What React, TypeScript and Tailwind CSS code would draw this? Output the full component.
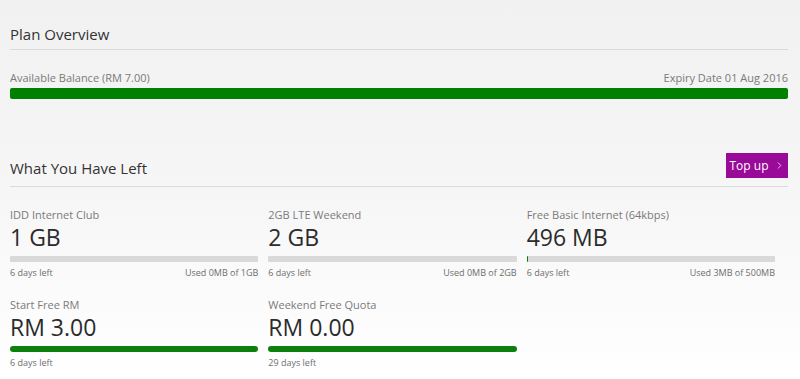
import React from 'react';
import { ChevronRight } from 'lucide-react';

type Allowance = {
  name: string;
  value: string;
  daysLeft: string;
  used?: string;
  fill: number;
  track: 'gray' | 'green';
};

const allowances: Allowance[] = [
  { name: 'IDD Internet Club', value: '1 GB', daysLeft: '6 days left', used: 'Used 0MB of 1GB', fill: 0, track: 'gray' },
  { name: '2GB LTE Weekend', value: '2 GB', daysLeft: '6 days left', used: 'Used 0MB of 2GB', fill: 0, track: 'gray' },
  { name: 'Free Basic Internet (64kbps)', value: '496 MB', daysLeft: '6 days left', used: 'Used 3MB of 500MB', fill: 0.7, track: 'gray' },
  { name: 'Start Free RM', value: 'RM 3.00', daysLeft: '6 days left', fill: 100, track: 'green' },
  { name: 'Weekend Free Quota', value: 'RM 0.00', daysLeft: '29 days left', fill: 100, track: 'green' }
];

function AllowanceCard({ item }: { item: Allowance }) {
  return (
    <div className="flex flex-col">
      <div className="text-[11px] leading-[15px] text-[#7a7a7a]">{item.name}</div>
      <div className="text-[23px] leading-[31px] text-[#2b2b2b]">{item.value}</div>
      <div
        className={
          item.track === 'green'
            ? 'mt-[3px] h-[6px] rounded-[3px] bg-[#0d7f0d] overflow-hidden'
            : 'mt-[3px] h-[6px] rounded-[1px] bg-[#d9d9d9] overflow-hidden'
        }
      >
        <div className="h-full bg-[#0d7f0d]" style={{ width: `${item.fill}%` }} />
      </div>
      <div className="mt-[4px] flex justify-between text-[9px] leading-[14px] text-[#6e6e6e]">
        <span>{item.daysLeft}</span>
        {item.used && <span>{item.used}</span>}
      </div>
    </div>
  );
}

export default function App() {
  return (
    <div
      className="min-h-[379px] w-[800px] bg-gradient-to-b from-[#f1f1f1] via-[#f6f6f6] to-white px-[10px] pt-[24px]"
      style={{ fontFamily: '"Open Sans", "Noto Sans", sans-serif' }}
    >
      <div className="w-[778px]">
        <h2 className="text-[15px] leading-[20px] text-[#333] pb-[5px] border-b border-[#dadada]">Plan Overview</h2>

        <div className="mt-[20px] flex justify-between text-[11px] leading-[16px] text-[#7a7a7a]">
          <span>Available Balance (RM 7.00)</span>
          <span>Expiry Date 01 Aug 2016</span>
        </div>
        <div className="mt-[2px] h-[11px] rounded-[2px] bg-[#008000]" />

        <div className="mt-[54px] flex items-end justify-between border-b border-[#dadada] pb-[8px]">
          <h2 className="text-[15px] leading-[20px] text-[#333]">What You Have Left</h2>
          <button className="flex h-[25px] w-[62px] items-center justify-center gap-[5px] bg-[#990a99] text-[12px] leading-[16px] text-white">
            Top up
            <ChevronRight size={11} strokeWidth={1.5} />
          </button>
        </div>
      </div>

      <div className="mt-[20px] grid w-[765px] grid-cols-3 gap-x-[10px] gap-y-[17px]">
        {allowances.map((item, i) => (
          <AllowanceCard key={i} item={item} />
        ))}
      </div>
    </div>
  );
}
